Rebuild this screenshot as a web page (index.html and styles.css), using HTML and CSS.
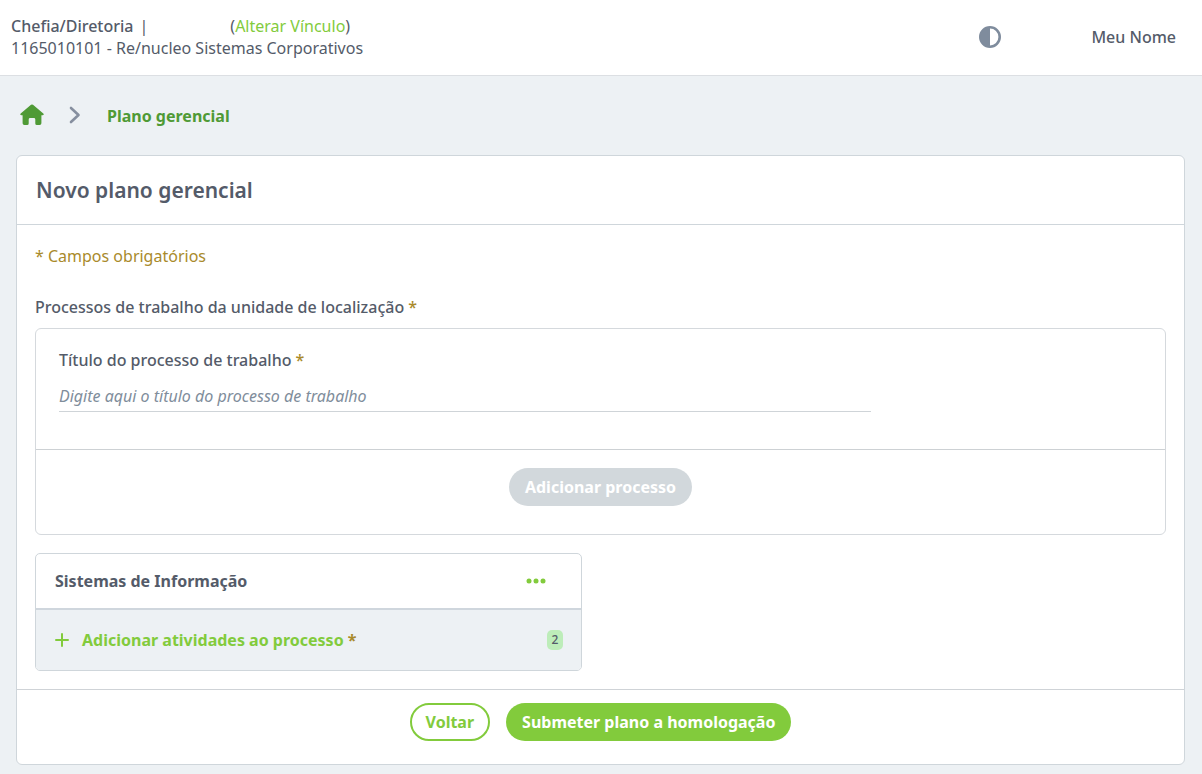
FILE: index.html
```html
<!DOCTYPE html>
<html lang="pt-BR">
<head>
<meta charset="utf-8">
<meta name="viewport" content="width=device-width, initial-scale=1">
<title>Plano gerencial</title>
<link rel="stylesheet" href="styles.css">
</head>
<body>
<header class="topbar">
  <div class="bond">
    <div class="bond-line"><span class="medium">Chefia/Diretoria</span><span>|</span><span class="bond-switch">(<a href="#">Alterar Vínculo</a>)</span></div>
    <div>1165010101 - Re/nucleo Sistemas Corporativos</div>
  </div>
  <button class="icon-button contrast" type="button" aria-label="Alternar contraste">
    <svg width="22" height="22" viewBox="0 0 22 22"><circle cx="11" cy="11" r="9.7" fill="none" stroke="#7f8c9d" stroke-width="2.6"/><path d="M11 1a10 10 0 0 0 0 20z" fill="#7f8c9d"/></svg>
  </button>
  <span class="user medium">Meu Nome</span>
</header>

<nav class="breadcrumb" aria-label="Trilha">
  <a class="home" href="#" aria-label="Início">
    <svg width="24" height="22" viewBox="0 0 24 22"><path d="M11 .8Q12 0 13 .8L23.3 9.4Q24.3 10.5 23.2 11.1Q22.8 11.3 21.4 11.3V19.2Q21.4 21 19.6 21H16.9Q15.3 21 15.3 19.4V15.4Q15.3 14 13.9 14H10.1Q8.7 14 8.7 15.4V19.4Q8.7 21 7.1 21H4.4Q2.6 21 2.6 19.2V11.3Q1.2 11.3.8 11.1Q-.3 10.5.7 9.4Z" fill="#4f9a35"/></svg>
  </a>
  <svg class="chevron" width="12" height="18" viewBox="0 0 12 18"><path d="M2 2l7.5 7L2 16" fill="none" stroke="#868f9f" stroke-width="2.6" stroke-linecap="round" stroke-linejoin="round"/></svg>
  <span class="current">Plano gerencial</span>
</nav>

<main class="card">
  <h1 class="card-title">Novo plano gerencial</h1>
  <form class="card-body">
    <p class="required-note">* Campos obrigatórios</p>
    <h2 class="section-label">Processos de trabalho da unidade de localização <span class="required">*</span></h2>
    <section class="panel">
      <div class="field">
        <label for="titulo">Título do processo de trabalho <span class="required">*</span></label>
        <input id="titulo" type="text" placeholder="Digite aqui o título do processo de trabalho">
      </div>
      <div class="panel-actions">
        <button class="button button-disabled" type="button" disabled>Adicionar processo</button>
      </div>
    </section>
    <section class="process">
      <div class="process-head">
        <h3>Sistemas de Informação</h3>
        <button class="icon-button" type="button" aria-label="Opções">
          <svg width="20" height="6" viewBox="0 0 20 6"><g fill="#82cb3c"><circle cx="3" cy="3" r="2.5"/><circle cx="10" cy="3" r="2.5"/><circle cx="17" cy="3" r="2.5"/></g></svg>
        </button>
      </div>
      <div class="process-foot">
        <button class="add-activity" type="button">
          <svg width="14" height="14" viewBox="0 0 14 14"><path d="M7 1v12M1 7h12" stroke="#82cb3c" stroke-width="2" stroke-linecap="round"/></svg>
          <span>Adicionar atividades ao processo <span class="required">*</span></span>
        </button>
        <span class="count">2</span>
      </div>
    </section>
  </form>
  <footer class="card-actions">
    <button class="button button-outline" type="button">Voltar</button>
    <button class="button button-primary" type="button">Submeter plano a homologação</button>
  </footer>
</main>
</body>
</html>
```
FILE: styles.css
```css
* {
  box-sizing: border-box;
}

body {
  margin: 0;
  background: #edf1f4;
  color: #545b69;
  font-family: "Noto Sans", sans-serif;
  font-size: 16px;
  line-height: 22px;
}

h1, h2, h3, p {
  margin: 0;
}

button, input {
  font: inherit;
  color: inherit;
}

button {
  border: 0;
  background: none;
  padding: 0;
  cursor: pointer;
}

svg {
  display: block;
}

a {
  color: #82cb3c;
  text-decoration: none;
}

.medium {
  font-weight: 500;
}

.topbar {
  display: flex;
  align-items: center;
  padding: 15px 26px 16px 11px;
  background: #fff;
  border-bottom: 1px solid #dcdfe3;
}

.bond {
  margin-right: auto;
}

.bond-line {
  display: flex;
  gap: 6px;
}

.bond-switch {
  margin-left: 76px;
}

.contrast {
  margin-right: 90px;
}

.breadcrumb {
  display: flex;
  align-items: center;
  padding: 28px 20px 27px;
}

.home,
.chevron {
  margin-bottom: 2px;
}

.chevron {
  margin-left: 25px;
  margin-right: 26px;
}

.current {
  color: #4f9a35;
  font-weight: 700;
}

.card {
  margin: 0 17px 9px 16px;
  background: #fff;
  border: 1px solid #cfd6db;
  border-radius: 6px;
}

.card-title {
  padding: 20px 19px;
  border-bottom: 1px solid #cfd6db;
  font-size: 21px;
  line-height: 28px;
  font-weight: 600;
}

.card-body {
  padding: 20px 18px 18px;
}

.required-note,
.required {
  color: #a98a2b;
}

.required-note {
  margin-bottom: 29px;
}

.section-label {
  margin-bottom: 10px;
  font-size: 16px;
  font-weight: 500;
}

.panel {
  margin-bottom: 18px;
  border: 1px solid #d5d9dd;
  border-radius: 6px;
}

.field {
  display: flex;
  flex-direction: column;
  gap: 10px;
  padding: 20px 23px 37px;
}

.field label {
  font-weight: 500;
}

.field input {
  width: 75%;
  height: 31px;
  padding: 0;
  border: 0;
  border-bottom: 1px solid #cfd4d8;
  background: none;
  outline: 0;
}

.field input::placeholder {
  color: #808d9b;
  font-style: italic;
  opacity: 1;
}

.panel-actions {
  display: flex;
  justify-content: center;
  padding: 18px 0 28px;
  border-top: 1px solid #cdd1d4;
}

.button {
  height: 38px;
  padding: 0 16px;
  border-radius: 20px;
  font-weight: 700;
}

.button-disabled {
  background: #d2d8dc;
  color: #fff;
}

.button-outline {
  padding: 0 14px;
  border: 2px solid #82cb3c;
  color: #82cb3c;
}

.button-primary {
  background: #82cb3c;
  color: #fff;
}

.process {
  width: 48.4%;
  border: 1px solid #cfd6db;
  border-radius: 5px;
  overflow: hidden;
}

.process-head,
.process-foot {
  display: flex;
  align-items: center;
  justify-content: space-between;
}

.process-head {
  padding: 16px 35px 16px 19px;
}

.process-head h3 {
  font-size: 16px;
  font-weight: 700;
}

.process-foot {
  padding: 19px 18px 19px 19px;
  border-top: 2px solid #cfd6dd;
  background: #edf1f4;
}

.add-activity {
  display: flex;
  align-items: center;
  gap: 13px;
  color: #82cb3c;
  font-weight: 700;
}

.count {
  padding: 0 5px;
  border-radius: 5px;
  background: #bdedb9;
  font-size: 12px;
  font-weight: 500;
  line-height: 20px;
}

.card-actions {
  display: flex;
  justify-content: center;
  gap: 16px;
  padding: 13px 0 23px;
  border-top: 1px solid #cfd3d7;
}
```
